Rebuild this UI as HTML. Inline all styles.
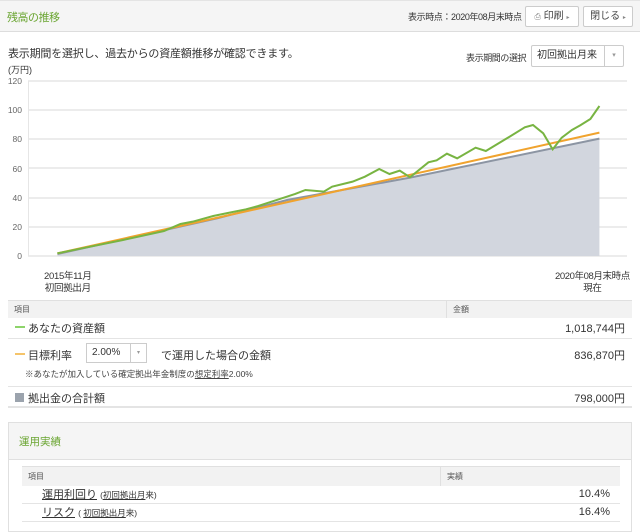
<!DOCTYPE html>
<html><head><meta charset="utf-8"><style>
*{margin:0;padding:0;box-sizing:border-box}
body{width:640px;height:524px;overflow:hidden;background:#fff;font-family:"Liberation Sans","Noto Sans CJK JP",sans-serif;color:#333;position:relative}
.a{position:absolute;white-space:nowrap}
.btn{position:absolute;border:1px solid #ccc;background:#fff;border-radius:2px;font-size:10px;color:#444;text-align:center;line-height:19px;height:21px}
.gray{color:#888}
</style></head><body>
<div class="a" style="left:0;top:0;width:640px;height:32px;background:#f5f5f5;border-top:1px solid #e4e4e4;border-bottom:1px solid #ddd"></div>
<div class="a" style="left:7px;top:9px;font-size:11px;color:#6aa531;letter-spacing:-0.5px">残高の推移</div>
<div class="a" style="left:408px;top:10px;font-size:9px;color:#333;letter-spacing:-0.4px">表示時点：2020年08月末時点</div>
<div class="btn" style="left:525px;top:6px;width:54px"><span class="gray" style="font-size:8px">⎙</span> 印刷 <span class="gray" style="font-size:6px">▸</span></div>
<div class="btn" style="left:583px;top:6px;width:50px">閉じる <span class="gray" style="font-size:6px">▸</span></div>
<div class="a" style="left:8px;top:45px;font-size:11px;color:#333;letter-spacing:-0.2px">表示期間を選択し、過去からの資産額推移が確認できます。</div>
<div class="a" style="left:466px;top:51px;font-size:9px;letter-spacing:-0.4px">表示期間の選択</div>
<div class="a" style="left:531px;top:45px;width:93px;height:22px;border:1px solid #ccc;border-radius:2px;font-size:10px;line-height:20px;padding-left:5px;background:#fff">初回拠出月来<span style="position:absolute;left:72px;top:0;width:19px;height:20px;border-left:1px solid #ccc;text-align:center;font-size:7px;color:#999">▾</span></div>
<div class="a" style="left:8px;top:63px;font-size:9px">(万円)</div>
<svg class="a" style="left:0;top:0" width="640" height="300">
<g font-size="8.5" fill="#666" font-family="Liberation Sans" text-anchor="end">
<text x="22" y="84">120</text><text x="22" y="113">100</text><text x="22" y="142">80</text><text x="22" y="172">60</text><text x="22" y="201">40</text><text x="22" y="230">20</text><text x="22" y="259">0</text></g>
<g stroke="#e6e6e6" stroke-width="1.5"><line x1="28" y1="81" x2="627" y2="81"/><line x1="28" y1="110" x2="627" y2="110"/><line x1="28" y1="139" x2="627" y2="139"/><line x1="28" y1="168" x2="627" y2="168"/><line x1="28" y1="198" x2="627" y2="198"/><line x1="28" y1="227" x2="627" y2="227"/><line x1="28" y1="256" x2="627" y2="256"/></g>
<line x1="28.5" y1="81" x2="28.5" y2="256" stroke="#e6e6e6"/>
<g transform="translate(0,100) scale(0.41,0.3333)">
<polygon points="140,462 530,355 700,300 1000,233 1462,116 1462,468 140,468" fill="#d2d6de"/>
<polyline points="140,462 530,355 700,300 1000,233 1462,116" fill="none" stroke="#8c95a3" stroke-width="2" vector-effect="non-scaling-stroke"/>
<polyline points="140,460 1462,98" fill="none" stroke="#f0a32e" stroke-width="2" vector-effect="non-scaling-stroke"/>
<polyline points="140,460 200,445 300,420 400,393 440,372 470,365 520,348 560,338 600,328 630,318 680,298 720,282 745,270 790,275 810,260 860,245 890,230 925,207 950,222 975,212 1000,232 1045,187 1065,181 1090,161 1115,175 1160,143 1185,153 1235,116 1280,82 1300,75 1325,100 1348,148 1370,113 1395,90 1415,76 1440,57 1462,18" fill="none" stroke="#78b442" stroke-width="2" vector-effect="non-scaling-stroke"/>
</g>
</svg>
<div class="a" style="left:44px;top:271px;font-size:9.5px;text-align:center;line-height:12px;letter-spacing:-0.3px">2015年11月<br>初回拠出月</div>
<div class="a" style="left:555px;top:271px;font-size:9.5px;text-align:center;line-height:12px;letter-spacing:-0.4px">2020年08月末時点<br>現在</div>
<div class="a" style="left:8px;top:300px;width:624px;height:18px;background:#f2f2f2;border-top:1px solid #e0e0e0"></div>
<div class="a" style="left:446px;top:300px;width:1px;height:18px;background:#e0e0e0"></div>
<div class="a" style="left:14px;top:304px;font-size:8px;color:#555">項目</div>
<div class="a" style="left:453px;top:304px;font-size:8px;color:#555">金額</div>
<div class="a" style="left:15px;top:326px;width:10px;height:2px;background:#8dd46a"></div>
<div class="a" style="left:28px;top:320px;font-size:11px">あなたの資産額</div>
<div class="a" style="right:15px;top:320px;font-size:11px">1,018,744円</div>
<div class="a" style="left:8px;top:338px;width:624px;height:1px;background:#e4e4e4"></div>
<div class="a" style="left:15px;top:353px;width:10px;height:2px;background:#f5c46a"></div>
<div class="a" style="left:28px;top:347px;font-size:11px">目標利率</div>
<div class="a" style="left:86px;top:343px;width:61px;height:20px;border:1px solid #ccc;font-size:10px;line-height:18px;padding-left:5px">2.00%<span style="position:absolute;left:43px;top:0;width:16px;height:18px;border-left:1px solid #ccc;text-align:center;font-size:6px;color:#999">▾</span></div>
<div class="a" style="left:161px;top:347px;font-size:11px">で運用した場合の金額</div>
<div class="a" style="right:15px;top:347px;font-size:11px">836,870円</div>
<div class="a" style="left:25px;top:368px;font-size:8.5px;color:#444">※あなたが加入している確定拠出年金制度の<u>想定利率</u>2.00%</div>
<div class="a" style="left:8px;top:386px;width:624px;height:1px;background:#e4e4e4"></div>
<div class="a" style="left:15px;top:393px;width:9px;height:9px;background:#9ba3ad"></div>
<div class="a" style="left:28px;top:390px;font-size:11px">拠出金の合計額</div>
<div class="a" style="right:15px;top:390px;font-size:11px">798,000円</div>
<div class="a" style="left:8px;top:406px;width:624px;height:2px;background:#e4e4e4"></div>
<div class="a" style="left:8px;top:422px;width:624px;height:110px;border:1px solid #e0e0e0"></div>
<div class="a" style="left:9px;top:423px;width:622px;height:37px;background:#f5f5f5;border-bottom:1px solid #e0e0e0"></div>
<div class="a" style="left:19px;top:434px;font-size:10.5px;color:#6aa531">運用実績</div>
<div class="a" style="left:22px;top:466px;width:598px;height:20px;background:#f2f2f2;border-top:1px solid #e0e0e0"></div>
<div class="a" style="left:440px;top:466px;width:1px;height:20px;background:#e0e0e0"></div>
<div class="a" style="left:28px;top:471px;font-size:8px;color:#555">項目</div>
<div class="a" style="left:447px;top:471px;font-size:8px;color:#555">実績</div>
<div class="a" style="left:42px;top:486px;font-size:11px"><u>運用利回り</u> <span style="font-size:8.5px">(<u>初回拠出月</u>来)</span></div>
<div class="a" style="right:30px;top:488px;font-size:11px">10.4%</div>
<div class="a" style="left:22px;top:503px;width:598px;height:1px;background:#e4e4e4"></div>
<div class="a" style="left:42px;top:504px;font-size:11px"><u>リスク</u> <span style="font-size:8.5px">( <u>初回拠出月</u>来)</span></div>
<div class="a" style="right:30px;top:506px;font-size:11px">16.4%</div>
<div class="a" style="left:22px;top:521px;width:598px;height:1px;background:#e4e4e4"></div>
</body></html>
